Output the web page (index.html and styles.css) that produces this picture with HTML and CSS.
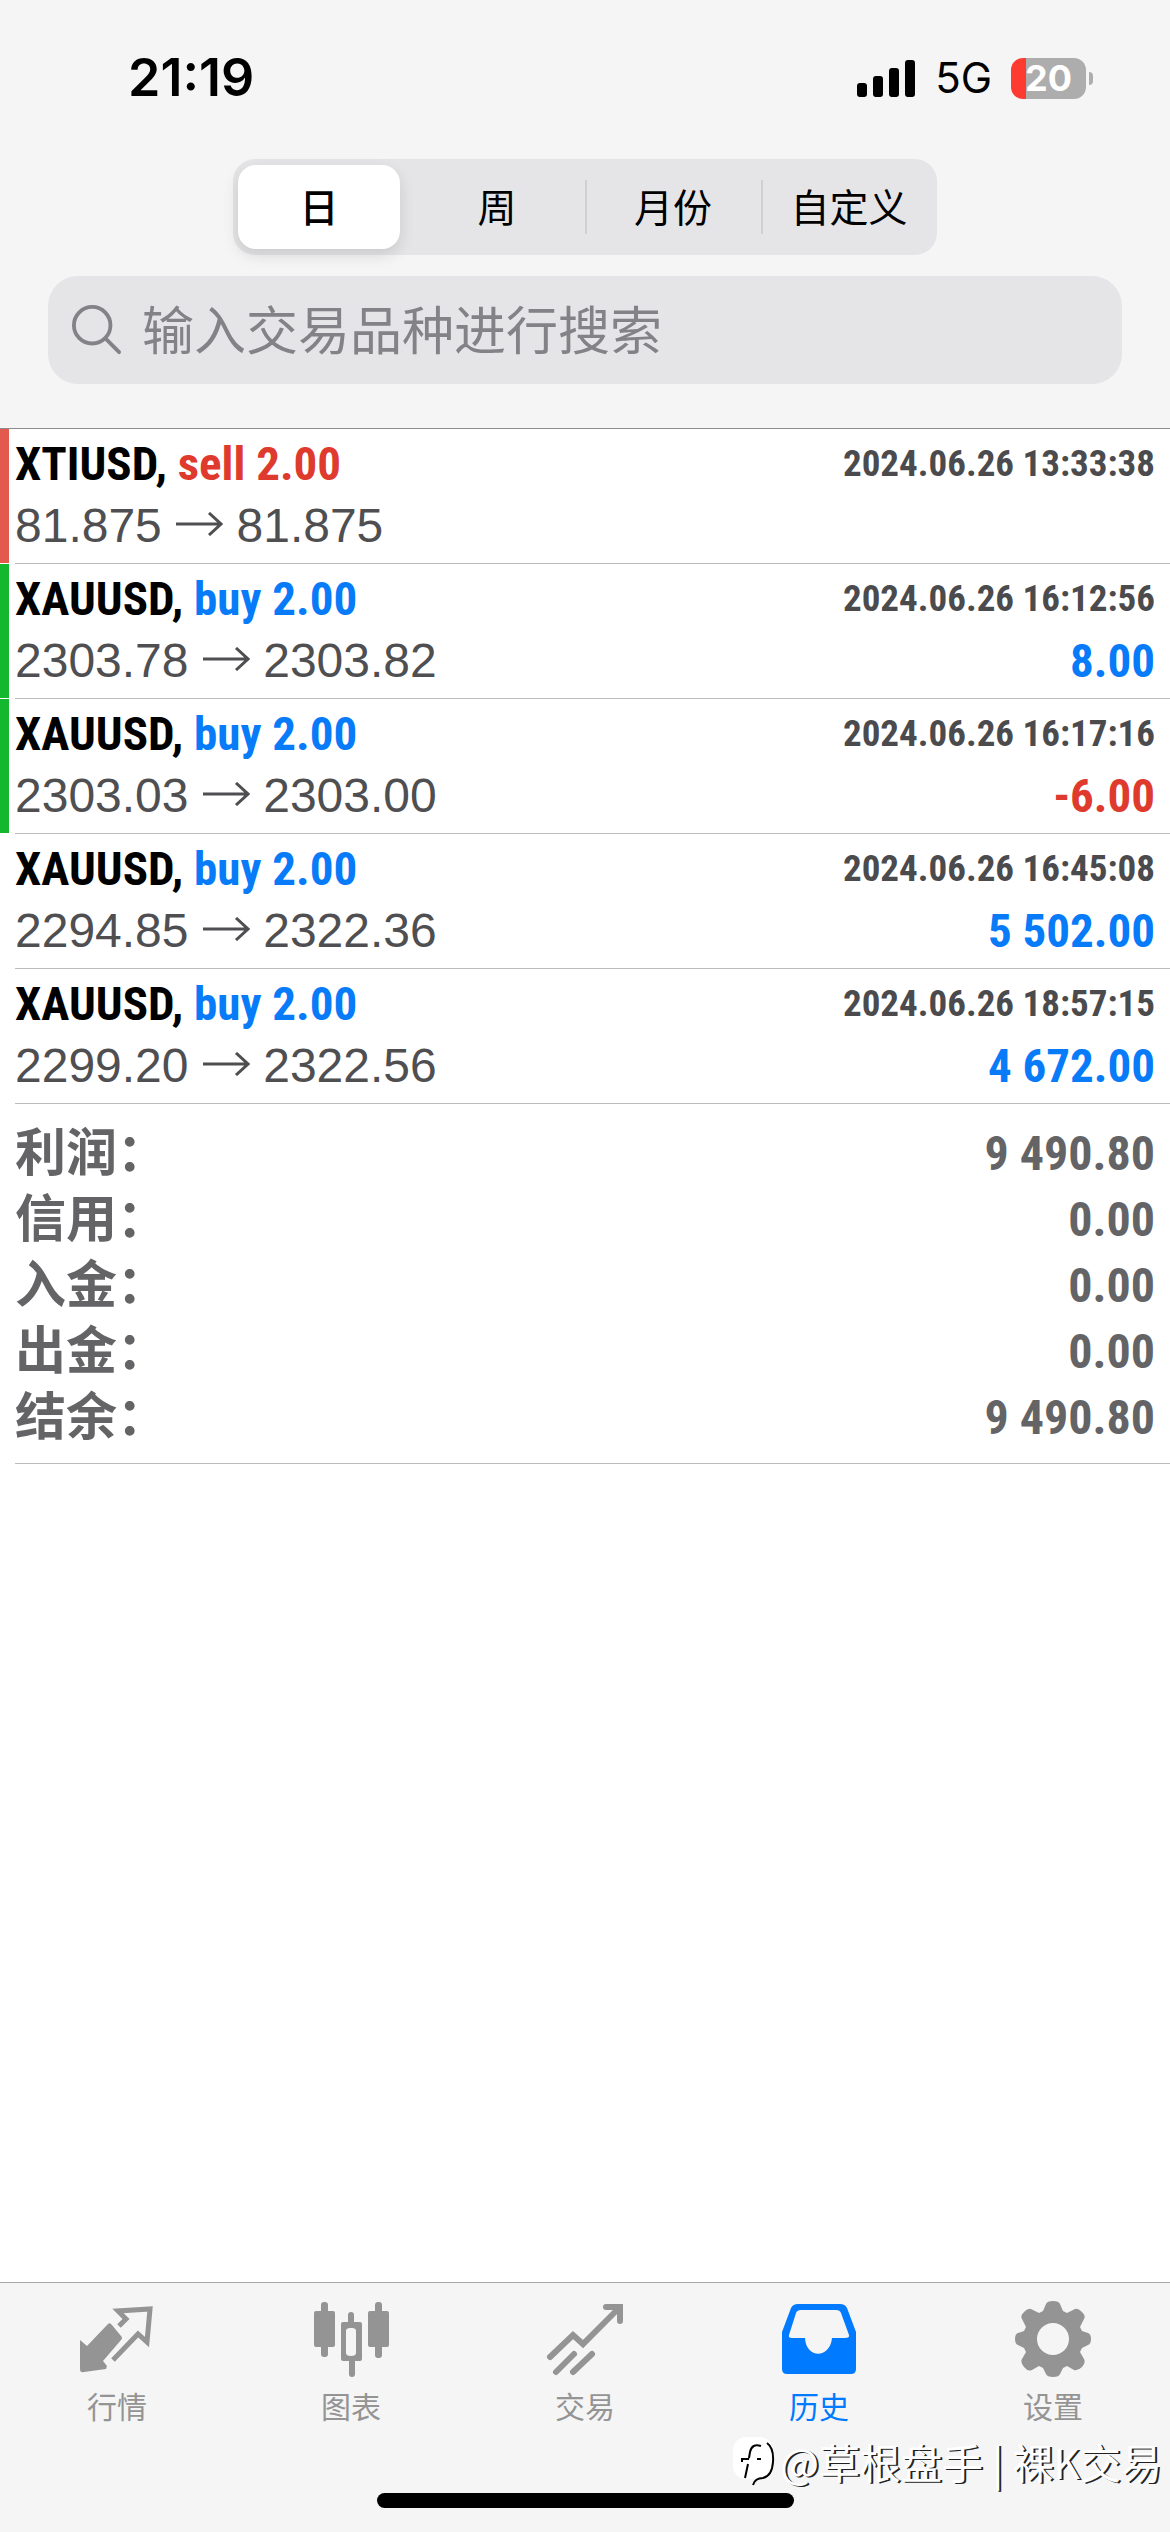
FILE: index.html
```html
<!DOCTYPE html>
<html lang="zh-CN">
<head>
<meta charset="utf-8">
<meta name="viewport" content="width=device-width, initial-scale=1">
<title>历史</title>
<link rel="stylesheet" href="styles.css">
</head>
<body>
<header class="top">
  <div class="status">
    <time class="clock">21:19</time>
    <div class="status-right">
      <svg class="signal" viewBox="0 0 60 38" aria-hidden="true"><rect x="1" y="24" width="10" height="14" rx="3"/><rect x="17" y="17" width="10" height="21" rx="3"/><rect x="33" y="9" width="10" height="29" rx="3"/><rect x="49" y="1" width="10" height="37" rx="3"/></svg>
      <span class="network">5G</span>
      <span class="battery"><span class="battery-level">20</span></span>
    </div>
  </div>
  <div class="segments">
    <button class="segment active" type="button">日</button>
    <button class="segment" type="button">周</button>
    <button class="segment divided" type="button">月份</button>
    <button class="segment divided" type="button">自定义</button>
  </div>
  <label class="search">
    <svg class="search-icon" viewBox="0 0 52 52" aria-hidden="true"><circle cx="21" cy="21" r="19"/><path d="M35 35 49 49"/></svg>
    <input class="search-input" type="search" placeholder="输入交易品种进行搜索" aria-label="输入交易品种进行搜索">
  </label>
</header>
<main class="content">
  <ul class="deals">
    <li class="deal loss-mark">
      <div class="line"><span class="symbol">XTIUSD, <span class="sell">sell 2.00</span></span><time class="date">2024.06.26 13:33:38</time></div>
      <div class="line"><span class="prices">81.875 <svg class="arrow" viewBox="0 0 48 24" aria-label="→"><path d="M1 12H45M34 1 46 12 34 23"/></svg> 81.875</span></div>
    </li>
    <li class="deal gain-mark">
      <div class="line"><span class="symbol">XAUUSD, <span class="buy">buy 2.00</span></span><time class="date">2024.06.26 16:12:56</time></div>
      <div class="line"><span class="prices">2303.78 <svg class="arrow" viewBox="0 0 48 24" aria-label="→"><path d="M1 12H45M34 1 46 12 34 23"/></svg> 2303.82</span><span class="profit buy">8.00</span></div>
    </li>
    <li class="deal gain-mark">
      <div class="line"><span class="symbol">XAUUSD, <span class="buy">buy 2.00</span></span><time class="date">2024.06.26 16:17:16</time></div>
      <div class="line"><span class="prices">2303.03 <svg class="arrow" viewBox="0 0 48 24" aria-label="→"><path d="M1 12H45M34 1 46 12 34 23"/></svg> 2303.00</span><span class="profit sell">-6.00</span></div>
    </li>
    <li class="deal">
      <div class="line"><span class="symbol">XAUUSD, <span class="buy">buy 2.00</span></span><time class="date">2024.06.26 16:45:08</time></div>
      <div class="line"><span class="prices">2294.85 <svg class="arrow" viewBox="0 0 48 24" aria-label="→"><path d="M1 12H45M34 1 46 12 34 23"/></svg> 2322.36</span><span class="profit buy">5 502.00</span></div>
    </li>
    <li class="deal">
      <div class="line"><span class="symbol">XAUUSD, <span class="buy">buy 2.00</span></span><time class="date">2024.06.26 18:57:15</time></div>
      <div class="line"><span class="prices">2299.20 <svg class="arrow" viewBox="0 0 48 24" aria-label="→"><path d="M1 12H45M34 1 46 12 34 23"/></svg> 2322.56</span><span class="profit buy">4 672.00</span></div>
    </li>
  </ul>
  <dl class="summary">
    <div class="total"><dt>利润：</dt><dd>9 490.80</dd></div>
    <div class="total"><dt>信用：</dt><dd>0.00</dd></div>
    <div class="total"><dt>入金：</dt><dd>0.00</dd></div>
    <div class="total"><dt>出金：</dt><dd>0.00</dd></div>
    <div class="total"><dt>结余：</dt><dd>9 490.80</dd></div>
  </dl>
</main>
<footer class="bottom">
  <nav class="tabs">
    <a class="tab" href="#quotes"><svg class="tab-icon" viewBox="0 0 80 80" aria-hidden="true"><path d="M3 41 10 47 31 25Q33 23 35 26L44 37Q46 39 44 41L26 62 30 67 29 70 7 73Q3 74 3 70Z"/><path class="stroke" d="M42 27 49 20 41 12 73 10 70 43 61 35 36 61"/></svg>行情</a>
    <a class="tab" href="#chart"><svg class="tab-icon" viewBox="0 0 80 80" aria-hidden="true"><rect x="10" y="3" width="7" height="55" rx="3"/><rect x="3" y="12" width="21" height="36" rx="2"/><rect x="64" y="3" width="7" height="56" rx="3"/><rect x="57" y="12" width="21" height="36" rx="2"/><path fill-rule="evenodd" d="M37 16q0-3 3-3t3 3v7h6q2 0 2 2v35q0 2-2 2h-5v13q0 3-3 3t-3-3V62h-6q-2 0-2-2V25q0-2 2-2h5zM39 29q-4 0-4 3v22q0 3 5 3t5-3V32q0-3-4-3z"/></svg>图表</a>
    <a class="tab" href="#trade"><svg class="tab-icon" viewBox="0 0 80 80" aria-hidden="true"><path class="stroke thick" d="M5 58 28 36 38 45 73 10M61 8H75V22M11 73 29 55M28 73 47 55"/></svg>交易</a>
    <a class="tab current" href="#history" aria-current="page"><svg class="tab-icon" viewBox="0 0 80 80" aria-hidden="true"><path fill-rule="evenodd" d="M19 5H61Q66 5 68 9L77 33V70Q77 75 72 75H8Q3 75 3 70V33L12 9Q14 5 19 5ZM22 11Q18 11 17 14L10 36Q9 39 13 39H26C27 60 51 60 53 39H66Q71 39 70 36L62 14Q61 11 57 11Z"/></svg>历史</a>
    <a class="tab" href="#settings"><svg class="tab-icon" viewBox="0 0 80 80" aria-hidden="true"><path fill-rule="evenodd" d="M33 5Q34 2 40 2T47 5L50 12 54 14 62 10Q65 9 69 13T71 20L67 28 69 32 75 34Q78 35 78 40T75 46L69 49 67 53 71 60Q73 64 69 68T61 71L54 67 50 69 47 75Q46 78 40 78T33 75L30 69 26 67 19 71Q15 73 11 68T9 60L13 53 11 49 5 46Q2 45 2 40T5 34L11 32 13 28 9 20Q7 17 11 13T18 10L26 14 30 12ZM40 24A16 16 0 1 0 40 56A16 16 0 1 0 40 24Z"/></svg>设置</a>
  </nav>
  <div class="home-bar"></div>
  <div class="watermark"><svg class="mark" viewBox="0 0 44 52" aria-hidden="true"><rect class="mark-tile" x="1" y="2" width="40" height="42" rx="13"/><path d="M35 8Q42 13 41 27 40 41 31 43 23 43 21 50M29 11Q20 8 18 17L17 23M16 29 13 43M10 27V24H17M25 24H29"/></svg><span>@草根盘手 | 裸K交易</span></div>
</footer>
</body>
</html>
```
FILE: styles.css
```css
* { box-sizing: border-box; }
body {
  margin: 0;
  min-height: 100vh;
  display: flex;
  flex-direction: column;
  background: #fff;
  color: #000;
  font-family: "Liberation Sans", "Noto Sans CJK SC", sans-serif;
}
ul, dl, dd { margin: 0; padding: 0; list-style: none; }
button, input { font: inherit; color: inherit; border: 0; margin: 0; }

.top { background: #f5f5f6; border-bottom: 1px solid #8c8c8e; padding: 48px 48px 44px; }
.status { display: flex; justify-content: space-between; align-items: center; height: 60px; padding: 0 33px 0 80px; }
.clock { font: 600 52px/60px Inter, sans-serif; }
.status-right { display: flex; align-items: center; gap: 19px; }
.signal { width: 60px; height: 38px; }
.network { font: 400 42px/60px Inter, sans-serif; }
.battery { position: relative; width: 75px; height: 41px; border-radius: 12px; background: linear-gradient(90deg, #fe3b30 15px, #adadad 15px); margin-right: 3px; }
.battery::after { content: ""; position: absolute; left: 78px; top: 14px; width: 4px; height: 13px; border-radius: 0 4px 4px 0; background: #adadad; }
.battery-level { display: block; text-align: center; color: #fff; font: 700 36px/41px Inter, sans-serif; }

.segments { display: grid; grid-template-columns: repeat(4, 1fr); width: 704px; max-width: 100%; height: 96px; margin: 51px auto 0; padding: 6px 0; border-radius: 22px; background: #e5e5e7; }
.segment { position: relative; padding: 0 0 4px; background: transparent; font: 400 39px/56px "Noto Sans CJK SC", sans-serif; }
.segment.active { border-radius: 18px; background: #fff; box-shadow: 0 6px 16px rgba(0, 0, 0, .12); font-weight: 500; margin: 0 9px 0 5px; }
.divided::before { content: ""; position: absolute; left: 0; top: 15px; bottom: 15px; width: 2px; background: #d0d0d3; }

.search { display: flex; align-items: center; gap: 20px; height: 108px; margin-top: 21px; padding: 0 24px; border-radius: 30px; background: #e5e5e7; color: #838387; }
.search-icon { width: 50px; height: 50px; fill: none; stroke: currentColor; stroke-width: 4; stroke-linecap: round; }
.search-input { flex: 1; min-width: 0; padding: 0 0 4px; background: transparent; font: 400 52px/76px "Noto Sans CJK SC", sans-serif; outline: 0; appearance: none; }
.search-input::placeholder { color: #838387; opacity: 1; }

.content { flex: 1; }
.deal { position: relative; padding: 4px 15px 6px; height: 135px; }
.deal::before { content: ""; position: absolute; left: 0; top: 0; bottom: 1px; width: 9px; }
.deal::after, .summary::after { content: ""; position: absolute; left: 15px; right: 0; bottom: 0; height: 1px; background: #bcbcbe; }
.loss-mark::before { background: #e2594e; }
.gain-mark::before { background: #14b82f; }
.line { display: flex; justify-content: space-between; align-items: center; height: 62px; white-space: nowrap; }
.symbol, .profit, .date, .total dd { font-family: "Roboto Condensed", "Liberation Sans Narrow", sans-serif; font-weight: 700; }
.symbol, .profit { font-size: 47px; line-height: 62px; }
.date { font-size: 37px; line-height: 62px; color: #4b4b4e; }
.prices { font-size: 48px; line-height: 64px; color: #4f4f52; }
.arrow { width: 48px; height: 24px; fill: none; stroke: currentColor; stroke-width: 3; vertical-align: 6px; }
.buy { color: #087bf8; }
.sell { color: #df3a2e; }

.summary { position: relative; padding: 17px 15px 13px; color: #646466; }
.total { display: flex; justify-content: space-between; align-items: center; height: 66px; }
.total dt { font: 700 51px/66px "Liberation Sans", "Noto Sans CJK SC", sans-serif; }
.total dd { font-size: 48px; line-height: 66px; }

.bottom { position: relative; background: #f5f5f6; border-top: 1px solid #a7a7aa; padding: 16px 0 24px; }
.tabs { display: grid; grid-template-columns: repeat(5, 1fr); }
.tab { display: flex; flex-direction: column; align-items: center; gap: 4px; color: #949494; text-decoration: none; font: 400 30px/44px "Noto Sans CJK SC", sans-serif; }
.tab.current { color: #007aff; }
.tab-icon { width: 80px; height: 80px; fill: currentColor; }
.stroke { fill: none; stroke: currentColor; stroke-width: 5; }
.thick { stroke-width: 6; stroke-linecap: round; }
.home-bar { width: 417px; max-width: 36%; height: 15px; margin: 66px auto 0; border-radius: 8px; background: #000; }
.watermark { position: absolute; right: 8px; bottom: 43px; display: flex; align-items: center; gap: 4px; color: #fff; text-shadow: 2px 1px 0 #222; font: 400 41px/56px "Noto Sans CJK SC", sans-serif; white-space: nowrap; }
.mark { width: 44px; height: 52px; fill: none; stroke: #000; stroke-width: 2; }
.mark-tile { fill: #fff; stroke: none; }
```
